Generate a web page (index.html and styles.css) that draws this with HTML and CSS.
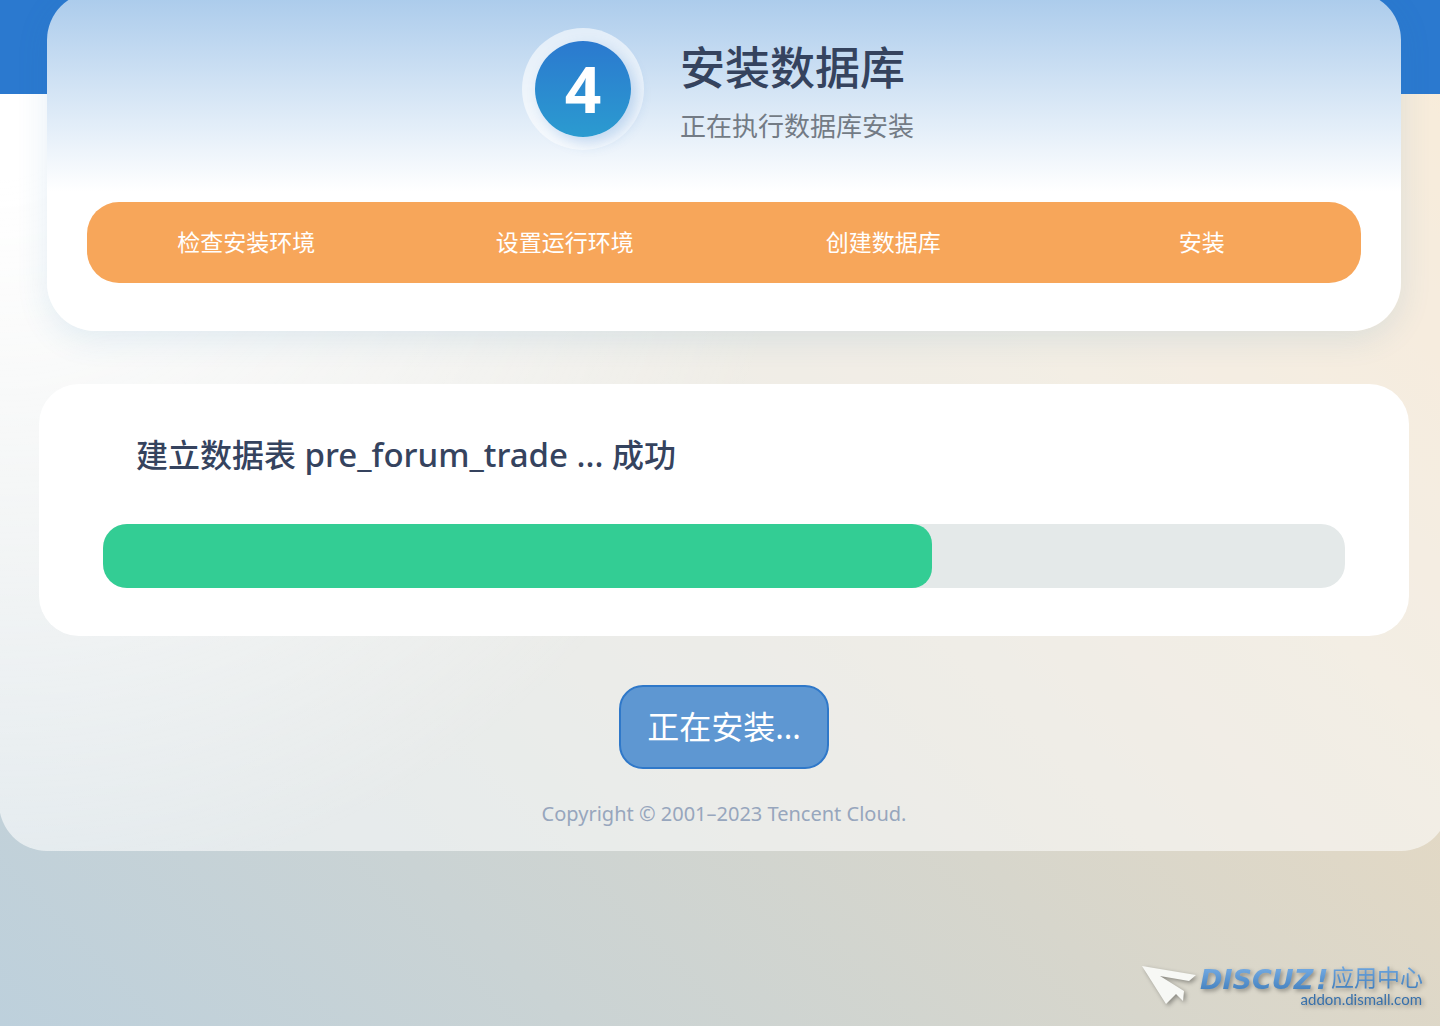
FILE: index.html
```html
<!DOCTYPE html>
<html lang="zh-CN">
<head>
<meta charset="utf-8">
<title>安装数据库</title>
<link rel="stylesheet" href="styles.css">
</head>
<body>
<main class="page">
  <section class="head-card">
    <header class="step-head">
      <div class="step-ring"><span class="step-number">4</span></div>
      <div class="step-text">
        <h1 class="step-title">安装数据库</h1>
        <p class="step-sub">正在执行数据库安装</p>
      </div>
    </header>
    <ol class="steps">
      <li>检查安装环境</li>
      <li>设置运行环境</li>
      <li>创建数据库</li>
      <li>安装</li>
    </ol>
  </section>
  <section class="task-card">
    <label class="task-label" for="progress">建立数据表<span class="table-name"> pre_forum_trade ... </span>成功</label>
    <progress class="task-progress" id="progress" value="828" max="1241"></progress>
  </section>
  <button class="install-button" type="button">正在安装...</button>
  <footer class="copyright">Copyright © 2001–2023 Tencent Cloud.</footer>
</main>
<svg class="watermark" width="288" height="52" viewBox="0 0 288 52" role="img" aria-label="Discuz! 应用中心">
  <defs>
    <linearGradient id="blue" x1="0" y1="0" x2="0" y2="1">
      <stop offset="0.2" stop-color="#6ea6df"/>
      <stop offset="0.9" stop-color="#427fbd"/>
    </linearGradient>
  </defs>
  <path class="plane" d="M2 6 56 15 49 21 20 16 44 31 43 41 36 34 26 44z"/>
  <g fill="url(#blue)">
    <text class="brand" x="60" y="29">DISCUZ</text>
    <text class="brand" x="176" y="29">!</text>
    <text class="center-name" x="191" y="26">应用中心</text>
  </g>
  <text class="site" x="282" y="45" text-anchor="end">addon.dismall.com</text>
</svg>
</body>
</html>
```
FILE: styles.css
```css
* {
  box-sizing: border-box;
}

html {
  min-height: 100%;
  background: linear-gradient(45deg, #bdd0dc 0%, #e4d9c4 70%, #f0d3ab 100%);
}

body {
  margin: 0;
  overflow-x: hidden;
  font-family: "Noto Sans", "Noto Sans CJK SC", sans-serif;
  color: #35435e;
}

.page {
  display: flex;
  flex-direction: column;
  align-items: center;
  margin: 0 -9px 0 -1px;
  padding: 0 40px 23px;
  border-radius: 0 0 48px 48px;
  background:
    linear-gradient(#2b79cf, #2b79cf) top / 100% 94px no-repeat,
    radial-gradient(800px 800px at 0 100px, #fff 10%, rgba(255, 255, 255, 0) 100%),
    rgba(255, 255, 255, 0.55);
}

.head-card {
  align-self: stretch;
  margin: -8px 8px 0;
  padding: 36px 40px 48px;
  border-radius: 48px;
  background: linear-gradient(#a9caeb, #fff 200px);
  box-shadow: 0 8px 32px rgba(43, 121, 180, 0.12);
}

.step-head {
  display: flex;
  justify-content: center;
  gap: 36px;
  padding-right: 12px;
  height: 174px;
}

.step-ring {
  width: 122px;
  height: 122px;
  padding: 13px;
  border-radius: 50%;
  background: rgba(255, 255, 255, 0.6);
}

.step-number {
  display: grid;
  place-items: center;
  height: 96px;
  border-radius: 50%;
  background: linear-gradient(#2b79cf, #2b9bd0);
  box-shadow: 6px 6px 14px rgba(43, 121, 207, 0.25);
  color: #fff;
  font-size: 64px;
  line-height: 96px;
  font-weight: 700;
}

.step-title {
  margin: 8px 0 0;
  font-size: 45px;
  line-height: 64px;
  font-weight: 500;
}

.step-sub {
  margin: 8px 0 0;
  font-size: 26px;
  line-height: 36px;
  color: #737b85;
}

.steps {
  display: grid;
  grid-template-columns: repeat(4, 1fr);
  margin: 0;
  padding: 0;
  border-radius: 32px;
  background: #f7a65a;
  color: #fff;
  font-size: 23px;
  line-height: 81px;
  text-align: center;
  list-style: none;
}

.task-card {
  display: flex;
  flex-direction: column;
  align-self: stretch;
  margin-top: 53px;
  padding: 47px 64px 48px;
  border-radius: 40px;
  background: #fff;
}

.task-label {
  padding-left: 33px;
  font-size: 32px;
  line-height: 48px;
  font-weight: 500;
}

.table-name {
  font-size: 33px;
}

.task-progress {
  appearance: none;
  width: 100%;
  height: 64px;
  margin-top: 45px;
  border: 0;
  border-radius: 24px;
  overflow: hidden;
  background: #e4e9e9;
}

.task-progress::-webkit-progress-bar {
  background: #e4e9e9;
}

.task-progress::-webkit-progress-value {
  border-radius: 0 20px 20px 0;
  background: #33cd94;
}

.install-button {
  margin-top: 49px;
  padding: 16px 26px;
  border: 2px solid #2f78c9;
  border-radius: 24px;
  background: #5e97d2;
  color: #fff;
  font: inherit;
  font-size: 32px;
  line-height: 48px;
}

.copyright {
  margin-top: 31px;
  font-size: 20px;
  line-height: 28px;
  color: #97a6bd;
}

.watermark {
  position: fixed;
  right: 12px;
  bottom: 14px;
  filter: drop-shadow(2px 2px 2px rgba(0, 0, 0, 0.35));
}

.plane {
  fill: #f7f8f5;
}

.brand {
  font: italic 700 27px "DejaVu Sans", sans-serif;
}

.center-name {
  font: 400 23px "Noto Sans CJK SC", sans-serif;
}

.site {
  fill: #3770ab;
  font: 15px Lato, sans-serif;
}
```
